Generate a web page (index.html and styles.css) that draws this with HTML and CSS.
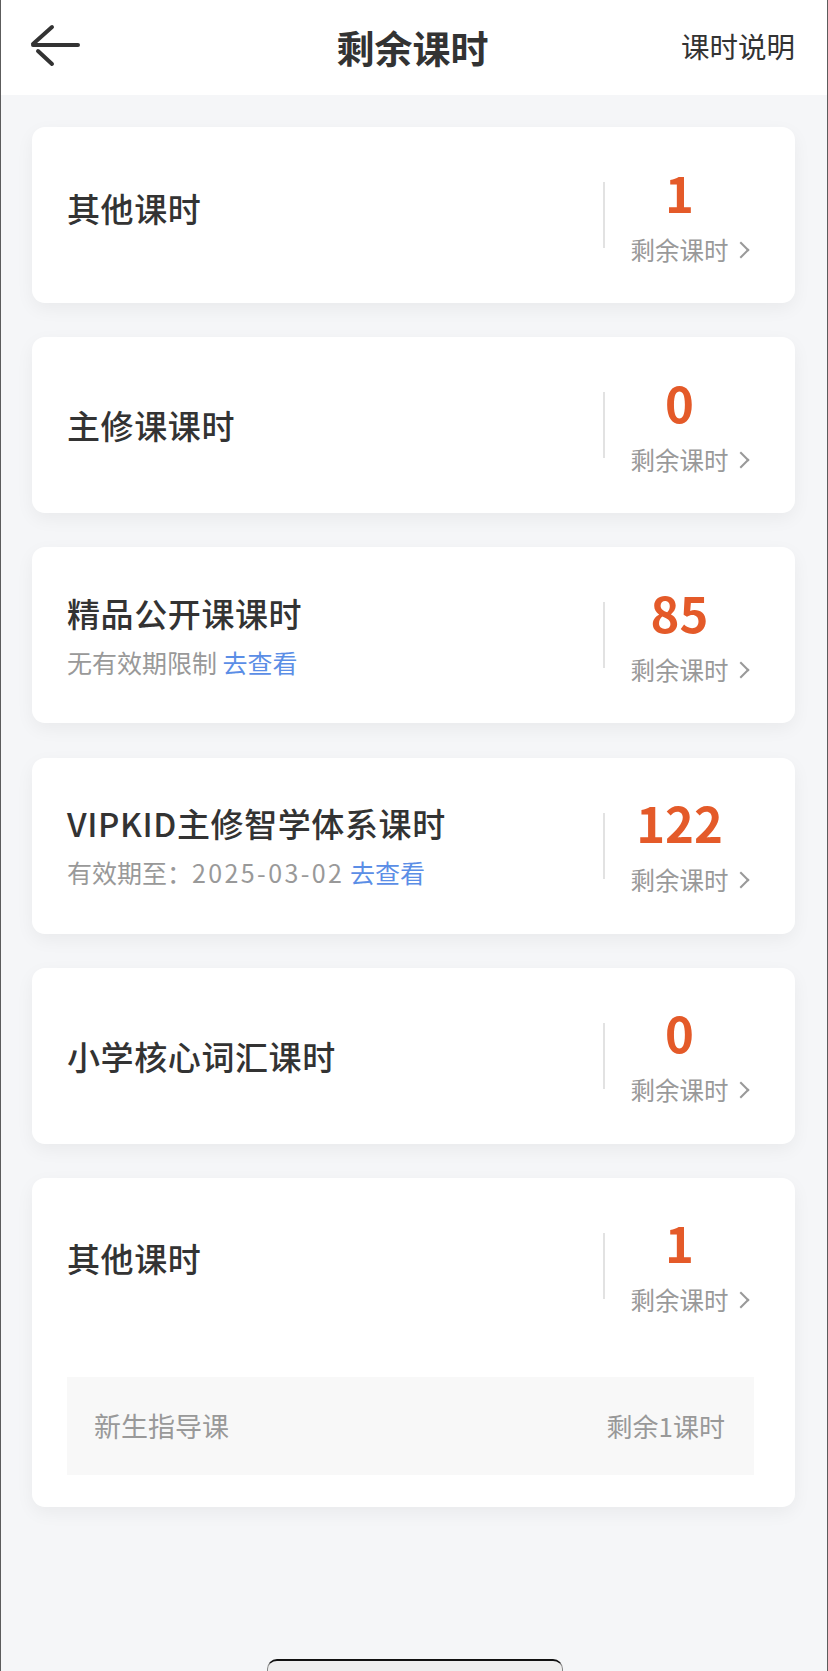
FILE: index.html
```html
<!DOCTYPE html>
<html lang="zh-CN">
<head>
  <meta charset="UTF-8">
  <meta name="viewport" content="width=device-width, initial-scale=1.0">
  <title>剩余课时</title>
  <link rel="stylesheet" href="styles.css">
</head>
<body>
  <div class="page">
    <header class="topbar">
      <a class="back" href="#">
        <svg width="50" height="44" viewBox="0 0 50 44">
          <path d="M22 3 L3 20 M3 21 H48 M8 27 L22 40" fill="none" stroke="#333" stroke-width="4" stroke-linecap="round"/>
        </svg>
      </a>
      <h1>剩余课时</h1>
      <a class="help" href="#">课时说明</a>
    </header>

    <main class="list">
      <!-- 其他课时 -->
      <section class="card">
        <div class="card-row">
          <div class="card-info">
            <div class="card-title title-up">其他课时</div>
          </div>
          <div class="card-count">
            <div class="num">1</div>
            <div class="label">剩余课时<span class="chev"></span></div>
          </div>
        </div>
      </section>

      <section class="card">
        <div class="card-row">
          <div class="card-info">
            <div class="card-title">主修课课时</div>
          </div>
          <div class="card-count">
            <div class="num">0</div>
            <div class="label">剩余课时<span class="chev"></span></div>
          </div>
        </div>
      </section>

      <section class="card">
        <div class="card-row">
          <div class="card-info">
            <div class="card-title">精品公开课课时</div>
            <div class="card-sub">无有效期限制 <a href="#">去查看</a></div>
          </div>
          <div class="card-count">
            <div class="num">85</div>
            <div class="label">剩余课时<span class="chev"></span></div>
          </div>
        </div>
      </section>

      <section class="card">
        <div class="card-row">
          <div class="card-info">
            <div class="card-title">VIPKID主修智学体系课时</div>
            <div class="card-sub">有效期至：<span class="date">2025-03-02</span> <a href="#">去查看</a></div>
          </div>
          <div class="card-count">
            <div class="num">122</div>
            <div class="label">剩余课时<span class="chev"></span></div>
          </div>
        </div>
      </section>

      <section class="card">
        <div class="card-row">
          <div class="card-info">
            <div class="card-title">小学核心词汇课时</div>
          </div>
          <div class="card-count">
            <div class="num">0</div>
            <div class="label">剩余课时<span class="chev"></span></div>
          </div>
        </div>
      </section>

      <section class="card card-more">
        <div class="card-row">
          <div class="card-info">
            <div class="card-title title-up">其他课时</div>
          </div>
          <div class="card-count">
            <div class="num">1</div>
            <div class="label">剩余课时<span class="chev"></span></div>
          </div>
        </div>
        <div class="sub-item">
          <span>新生指导课</span>
          <span>剩余1课时</span>
        </div>
      </section>
    </main>

    <div class="home-bar"></div>
  </div>
</body>
</html>
```

FILE: styles.css
```css
* {
  margin: 0;
  padding: 0;
  box-sizing: border-box;
}
html, body {
  width: 100%;
  height: 100%;
  background-color: #f5f6f8;
  font-family: "Noto Sans CJK SC", "Noto Sans", sans-serif;
  color: #333;
}
a {
  text-decoration: none;
  color: inherit;
}
.page {
  position: relative;
  min-height: 100vh;
  border-left: 1px solid #5c5c5c;
  border-right: 1px solid #5c5c5c;
  overflow: hidden;
}

/* Barra superior */
.topbar {
  height: 95px;
  background-color: #fff;
  display: grid;
  grid-template-columns: 1fr auto 1fr;
  align-items: center;
  padding: 0 32px 0 29px;
}
.back {
  display: flex;
  align-items: center;
  height: 44px;
  margin-top: -4px;
}
.topbar h1 {
  font-size: 38px;
  font-weight: 700;
  color: #333;
  line-height: 1;
  margin-top: -2px;
}
.help {
  justify-self: end;
  font-size: 28.5px;
  color: #333;
  line-height: 1;
  margin-top: -2px;
}

/* Lista de cartões */
.list {
  display: flex;
  flex-direction: column;
  gap: 34.2px;
  padding: 32px 32px 60px 31px;
}
.card {
  background-color: #fff;
  border-radius: 13px;
  box-shadow: 0 6px 18px rgba(0, 0, 0, 0.05);
  padding: 0 41px 0 35px;
}
.card-more {
  padding-bottom: 32px;
}
.card-row {
  height: 176px;
  display: flex;
  align-items: center;
  justify-content: space-between;
}
.card-info {
  display: flex;
  flex-direction: column;
}
.card-title {
  font-size: 33px;
  font-weight: 500;
  line-height: 40px;
  letter-spacing: 0.6px;
  color: #333;
}
.title-up {
  margin-bottom: 15px;
}
.card-sub {
  margin-top: 13px;
  font-size: 25px;
  line-height: 32px;
  color: #999;
}
.card-sub .date {
  letter-spacing: 2.4px;
}
.card-sub a {
  color: #5b8ee6;
}

.card-count {
  display: flex;
  flex-direction: column;
  align-items: center;
  width: 151px;
  padding-top: 2px;
  border-left: 2px solid #e2e2e2;
  height: 66px;
  justify-content: center;
  position: relative;
}
.num {
  font-size: 49px;
  font-weight: 700;
  line-height: 50px;
  color: #e45a29;
  margin-top: -31px;
}
.label {
  position: relative;
  margin-top: 21px;
  font-size: 24.5px;
  line-height: 24px;
  color: #999;
  margin-bottom: -27px;
}
.chev {
  position: absolute;
  left: calc(100% + 11px);
  top: 4px;
  width: 12px;
  height: 12px;
  border-top: 2px solid #999;
  border-right: 2px solid #999;
  transform: translateX(-5px) rotate(45deg);
  transform-origin: center;
  margin-top: 2px;
}

.sub-item {
  margin-top: 23px;
  height: 98px;
  background-color: #f8f8f8;
  display: flex;
  align-items: center;
  justify-content: space-between;
  padding: 0 29px 0 27px;
  font-size: 26px;
  color: #999;
}
.sub-item span:first-child {
  font-size: 27px;
}

.home-bar {
  position: absolute;
  left: 266px;
  bottom: 0;
  width: 296px;
  height: 12px;
  border-top: 2px solid #111;
  border-left: 1px solid #888;
  border-right: 1px solid #888;
  border-radius: 10px 10px 0 0;
  background-color: #eee;
}
```
